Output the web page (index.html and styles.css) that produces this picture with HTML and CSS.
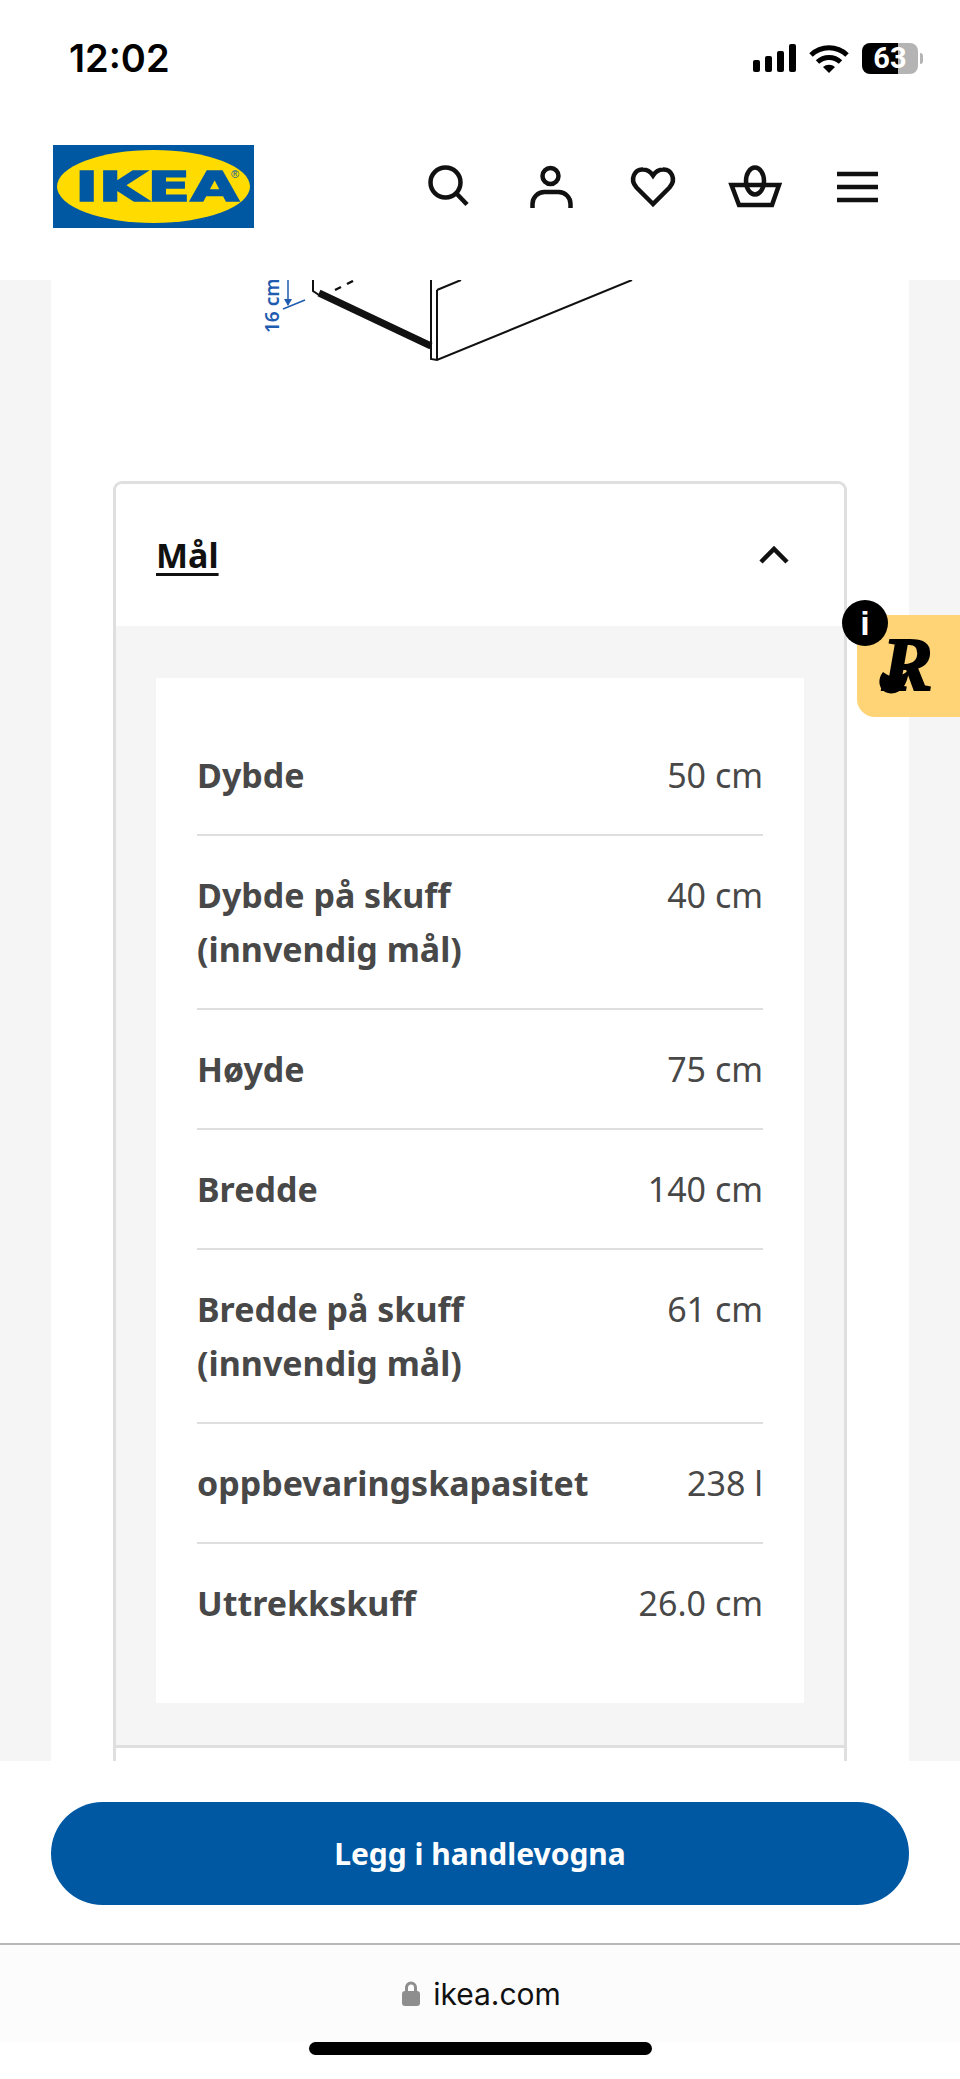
FILE: index.html
```html
<!DOCTYPE html>
<html lang="nb">

<head>
    <meta charset="UTF-8">
    <meta name="viewport" content="width=device-width, initial-scale=1.0">
    <title>IKEA - Mål</title>
    <link rel="stylesheet" href="styles.css">
</head>

<body>
    <div class="screen">
        <!-- Phone status bar and site header -->
        <header class="top">
            <div class="status-bar">
                <span class="clock">12:02</span>
                <div class="status-icons">
                    <svg class="signal" width="44" height="28" viewBox="0 0 44 28">
                        <rect x="0" y="16" width="7" height="12" rx="2"/>
                        <rect x="12" y="12" width="7" height="16" rx="2"/>
                        <rect x="24" y="7" width="7" height="21" rx="2"/>
                        <rect x="36" y="0" width="7" height="28" rx="2"/>
                    </svg>
                    <svg class="wifi" width="40" height="29" viewBox="0 0 40 29">
                        <path d="M2 11a26 26 0 0 1 36 0" fill="none" stroke="#000" stroke-width="5"/>
                        <path d="M8.5 18a17 17 0 0 1 23 0" fill="none" stroke="#000" stroke-width="5"/>
                        <path d="M14 23a9 9 0 0 1 12 0l-6 6z"/>
                    </svg>
                    <div class="battery">
                        <div class="battery-body">63</div>
                        <div class="battery-nub"></div>
                    </div>
                </div>
            </div>
            <div class="site-nav">
                <svg class="logo" width="201" height="83" viewBox="0 0 201 83">
                    <rect width="201" height="83" fill="#0058a3"/>
                    <ellipse cx="100.500" cy="41.500" rx="96.500" ry="36.500" fill="#ffdb00"/>
                    <text class="logo-text" x="22" y="56" textLength="164" lengthAdjust="spacingAndGlyphs">IKEA</text>
                    <text class="logo-mark" x="178" y="33">®</text>
                </svg>
                <nav class="nav-icons">
                    <div class="nav-icon">
                        <svg width="56" height="56" viewBox="0 0 56 56">
                            <circle cx="24.500" cy="23.500" r="15"/>
                            <path d="M35 34l11 11.500"/>
                        </svg>
                    </div>
                    <div class="nav-icon">
                        <svg width="56" height="56" viewBox="0 0 56 56">
                            <circle cx="27.500" cy="17" r="8"/>
                            <path d="M9.500 49v-4a12 12 0 0 1 12-12h14a12 12 0 0 1 12 12v4"/>
                        </svg>
                    </div>
                    <div class="nav-icon">
                        <svg width="56" height="56" viewBox="0 0 56 56">
                            <path d="M28 45L11.500 28.500C4 20 10 10 18 10.500C23 10.500 26 13.500 28 16.500C30 13.500 33 10.500 38 10.500C46 10 52 20 44.500 28.500Z"/>
                        </svg>
                    </div>
                    <div class="nav-icon">
                        <svg width="56" height="56" viewBox="0 0 56 56">
                            <path d="M4.500 26H52L45 46H12Z"/>
                            <ellipse cx="28" cy="22" rx="9" ry="13.500"/>
                        </svg>
                    </div>
                    <div class="nav-icon">
                        <svg width="56" height="56" viewBox="0 0 56 56">
                            <path d="M8 15H49M8 28H49M8 41H49"/>
                        </svg>
                    </div>
                </nav>
            </div>
        </header>

        <main class="page">
            <div class="panel">
                <!-- Bottom of the product drawing, cut off by the header -->
                <svg class="drawing" width="858" height="201" viewBox="0 0 858 201">
                    <text class="drawing-size" transform="translate(228 53) rotate(-90)">16 cm</text>
                    <path class="drawing-blue" d="M237 0V25M232 29L254 20"/>
                    <path class="drawing-arrow" d="M233 19H241L237 26Z"/>
                    <path class="drawing-line" d="M262 0V11L268 15"/>
                    <path class="drawing-rail" d="M268 13L380 66"/>
                    <path class="drawing-dash" d="M284 10L290 7M296 4L302 1"/>
                    <path class="drawing-line" d="M380 0V79L386 80L581 0M386 10V80M386 10L410 0"/>
                </svg>

                <!-- Dimensions accordion -->
                <section class="accordion">
                    <div class="accordion-head">
                        <h2 class="accordion-title">Mål</h2>
                        <svg width="30" height="20" viewBox="0 0 30 20">
                            <path class="chevron" d="M2 17L15 4L28 17"/>
                        </svg>
                    </div>
                    <div class="accordion-body">
                        <div class="measure-list">
                            <div class="measure-row">
                                <span class="measure-name">Dybde</span>
                                <span class="measure-value">50 cm</span>
                            </div>
                            <div class="measure-row">
                                <span class="measure-name">Dybde på skuff<br>(innvendig mål)</span>
                                <span class="measure-value">40 cm</span>
                            </div>
                            <div class="measure-row">
                                <span class="measure-name">Høyde</span>
                                <span class="measure-value">75 cm</span>
                            </div>
                            <div class="measure-row">
                                <span class="measure-name">Bredde</span>
                                <span class="measure-value">140 cm</span>
                            </div>
                            <div class="measure-row">
                                <span class="measure-name">Bredde på skuff<br>(innvendig mål)</span>
                                <span class="measure-value">61 cm</span>
                            </div>
                            <div class="measure-row">
                                <span class="measure-name">oppbevaringskapasitet</span>
                                <span class="measure-value">238 l</span>
                            </div>
                            <div class="measure-row">
                                <span class="measure-name">Uttrekkskuff</span>
                                <span class="measure-value">26.0 cm</span>
                            </div>
                        </div>
                    </div>
                    <div class="accordion-next"></div>
                </section>
            </div>
        </main>

        <!-- Floating badge from a browser extension -->
        <div class="badge">
            <svg class="badge-mark" width="72" height="72" viewBox="0 0 72 72">
                <path d="M8 42C0 52 6 66 20 63C29 61 33 50 34 40C27 46 18 50 8 42Z"/>
                <text class="badge-letter" x="7" y="60">R</text>
            </svg>
        </div>
        <div class="badge-info">i</div>

        <!-- Buy button and browser bar -->
        <footer class="bottom">
            <div class="buy-area">
                <div class="buy-button">Legg i handlevogna</div>
            </div>
            <div class="url-bar">
                <svg width="18" height="25" viewBox="0 0 18 25">
                    <path class="lock-shackle" d="M4.500 11V6.500a4.500 4.500 0 0 1 9 0V11"/>
                    <rect y="10" width="18" height="15" rx="3" fill="#8e8e8e"/>
                </svg>
                <span class="url-text">ikea.com</span>
            </div>
            <div class="home-bar"></div>
        </footer>
    </div>
</body>

</html>
```

FILE: styles.css
```css
/* Basic page frame */
body {
    margin: 0;
    background: #fff;
    font-family: "Noto Sans", sans-serif;
}

.screen {
    position: relative;
    display: flex;
    flex-direction: column;
    width: 960px;
    height: 2079px;
    overflow: hidden;
}

/* Status bar */
.top {
    flex: none;
    height: 280px;
    background: #fff;
}

.status-bar {
    display: flex;
    align-items: center;
    justify-content: space-between;
    height: 116px;
    padding: 0 37px 0 69px;
}

.clock {
    font-family: Inter, sans-serif;
    font-size: 38px;
    font-weight: 600;
    color: #000;
}

.status-icons {
    display: flex;
    align-items: center;
    gap: 12px;
}

.battery {
    display: flex;
    align-items: center;
    gap: 2px;
    margin-left: 1px;
}

.battery-body {
    width: 56px;
    height: 31px;
    border-radius: 8px;
    background: linear-gradient(90deg, #000 64%, #b4b4b4 64%);
    color: #fff;
    font-family: Roboto, sans-serif;
    font-size: 29px;
    font-weight: 700;
    line-height: 31px;
    text-align: center;
}

.battery-nub {
    width: 3px;
    height: 11px;
    border-radius: 0 3px 3px 0;
    background: #b4b4b4;
}

/* Logo and nav icons */
.site-nav {
    display: flex;
    align-items: center;
    justify-content: space-between;
    height: 141px;
    padding: 0 52px 0 53px;
}

.logo-text {
    font-family: "DejaVu Sans", sans-serif;
    font-size: 41px;
    font-weight: 700;
    fill: #0058a3;
    stroke: #0058a3;
    stroke-width: 1.5px;
}

.logo-mark {
    font-family: "Liberation Sans", sans-serif;
    font-size: 11px;
    fill: #0058a3;
}

.nav-icons {
    display: flex;
}

.nav-icon {
    display: flex;
    justify-content: center;
    width: 102px;
}

.nav-icon svg {
    fill: none;
    stroke: #111;
    stroke-width: 4.500px;
}

/* Main scrolled content */
.page {
    flex: 1;
    min-height: 0;
    overflow: hidden;
    background: #f5f5f5;
}

.panel {
    margin: 0 51px;
    background: #fff;
}

.drawing {
    display: block;
}

.drawing-size {
    font-family: "Noto Sans", sans-serif;
    font-size: 19px;
    font-weight: 600;
    fill: #1f5cb0;
}

.drawing-blue {
    fill: none;
    stroke: #1f5cb0;
    stroke-width: 1.500px;
}

.drawing-arrow {
    fill: #1f5cb0;
}

.drawing-line {
    fill: none;
    stroke: #111;
    stroke-width: 2px;
}

.drawing-rail {
    fill: none;
    stroke: #111;
    stroke-width: 7px;
}

.drawing-dash {
    fill: none;
    stroke: #111;
    stroke-width: 2.500px;
}

/* Accordion */
.accordion {
    margin: 0 62px;
    border: 3px solid #dfdfdf;
    border-bottom: 0;
    border-radius: 9px 9px 0 0;
}

.accordion-head {
    display: flex;
    align-items: center;
    justify-content: space-between;
    height: 142px;
    padding: 0 55px 0 40px;
    background: #fff;
    border-radius: 6px 6px 0 0;
}

.accordion-title {
    margin: 0;
    font-size: 34px;
    font-weight: 700;
    color: #111;
    text-decoration: underline;
    text-decoration-thickness: 3px;
    text-underline-offset: 5px;
}

.chevron {
    fill: none;
    stroke: #111;
    stroke-width: 4.500px;
}

.accordion-body {
    padding: 52px 40px 42px;
    background: #f5f5f5;
    border-bottom: 3px solid #dfdfdf;
}

.measure-list {
    padding: 38px 41px 41px;
    background: #fff;
}

.measure-row {
    display: flex;
    align-items: flex-start;
    justify-content: space-between;
    padding: 32px 0;
    font-size: 34px;
    line-height: 54px;
    color: #484848;
    border-bottom: 2px solid #dfdfdf;
}

.measure-row:last-child {
    border-bottom: 0;
}

.measure-name {
    font-weight: 700;
}

.accordion-next {
    height: 40px;
    background: #fff;
}

/* Floating badge */
.badge {
    position: absolute;
    top: 615px;
    left: 857px;
    display: flex;
    align-items: center;
    justify-content: flex-start;
    width: 103px;
    height: 102px;
    padding-left: 18px;
    box-sizing: border-box;
    border-radius: 0 0 0 18px;
    background: #ffd477;
}

.badge-mark {
    fill: #000;
}

.badge-letter {
    font-family: "Liberation Serif", serif;
    font-size: 76px;
    font-style: italic;
    font-weight: 700;
    stroke: #000;
    stroke-width: 2px;
}

.badge-info {
    position: absolute;
    top: 600px;
    left: 842px;
    width: 46px;
    height: 46px;
    border-radius: 50%;
    background: #000;
    color: #fff;
    font-family: "Liberation Sans", sans-serif;
    font-size: 34px;
    font-weight: 700;
    line-height: 46px;
    text-align: center;
}

/* Footer */
.bottom {
    flex: none;
    height: 318px;
    background: #fff;
}

.buy-area {
    height: 184px;
    padding: 41px 51px 0;
    box-sizing: border-box;
    border-bottom: 2px solid #b8b8b8;
}

.buy-button {
    height: 103px;
    border-radius: 52px;
    background: #0058a3;
    color: #fff;
    font-size: 30px;
    font-weight: 700;
    line-height: 103px;
    text-align: center;
}

.url-bar {
    display: flex;
    align-items: center;
    justify-content: center;
    gap: 13px;
    height: 97px;
    padding-left: 3px;
    background: #fcfcfc;
}

.lock-shackle {
    fill: none;
    stroke: #8e8e8e;
    stroke-width: 3px;
}

.url-text {
    font-family: Inter, sans-serif;
    font-size: 30px;
    color: #111;
}

.home-bar {
    width: 343px;
    height: 13px;
    margin: 0 auto;
    border-radius: 7px;
    background: #000;
}
```
